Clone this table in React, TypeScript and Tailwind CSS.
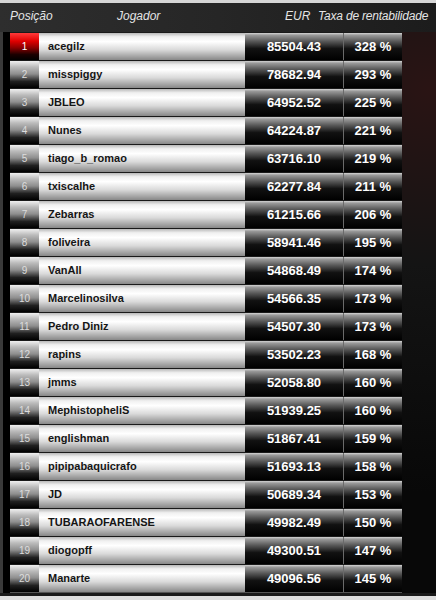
import React from "react";

type Player = {
  name: string;
  eur: string;
  rate: string;
};

const players: Player[] = [
  { name: "acegilz", eur: "85504.43", rate: "328 %" },
  { name: "misspiggy", eur: "78682.94", rate: "293 %" },
  { name: "JBLEO", eur: "64952.52", rate: "225 %" },
  { name: "Nunes", eur: "64224.87", rate: "221 %" },
  { name: "tiago_b_romao", eur: "63716.10", rate: "219 %" },
  { name: "txiscalhe", eur: "62277.84", rate: "211 %" },
  { name: "Zebarras", eur: "61215.66", rate: "206 %" },
  { name: "foliveira", eur: "58941.46", rate: "195 %" },
  { name: "VanAll", eur: "54868.49", rate: "174 %" },
  { name: "Marcelinosilva", eur: "54566.35", rate: "173 %" },
  { name: "Pedro Diniz", eur: "54507.30", rate: "173 %" },
  { name: "rapins", eur: "53502.23", rate: "168 %" },
  { name: "jmms", eur: "52058.80", rate: "160 %" },
  { name: "MephistopheliS", eur: "51939.25", rate: "160 %" },
  { name: "englishman", eur: "51867.41", rate: "159 %" },
  { name: "pipipabaquicrafo", eur: "51693.13", rate: "158 %" },
  { name: "JD", eur: "50689.34", rate: "153 %" },
  { name: "TUBARAOFARENSE", eur: "49982.49", rate: "150 %" },
  { name: "diogopff", eur: "49300.51", rate: "147 %" },
  { name: "Manarte", eur: "49096.56", rate: "145 %" },
];

function Row({ player, pos }: { player: Player; pos: number }) {
  const first = pos === 1;
  return (
    <div className="flex h-[28px] border-t border-[#1a1a1a]">
      {/* posição */}
      <div
        className={
          first
            ? "flex w-[29px] shrink-0 items-center justify-center bg-[linear-gradient(to_bottom,#ff3a3a_0%,#e00000_30%,#8a0000_55%,#1a0000_80%,#000_100%)] text-[10px] text-white"
            : "flex w-[29px] shrink-0 items-center justify-center bg-[linear-gradient(to_bottom,#f0f0f0_0%,#bcbcbc_22%,#8e8e8e_48%,#202020_76%,#000_100%)] text-[10px] text-[#dcdcdc]"
        }
      >
        {pos}
      </div>
      {/* jogador */}
      <div className="flex w-[206px] shrink-0 items-center bg-[linear-gradient(to_bottom,#b8b8b8_0%,#f0f0f0_14%,#ffffff_32%,#dadada_62%,#a2a2a2_88%,#888_100%)] pl-[9px] text-[11px] font-bold text-[#151515]">
        {player.name}
      </div>
      {/* EUR */}
      <div className="flex w-[98px] shrink-0 items-center justify-center bg-[linear-gradient(to_bottom,#d4d4d4_0%,#9a9a9a_8%,#5a5a5a_30%,#111_58%,#000_100%)] text-[13px] font-bold text-white">
        {player.eur}
      </div>
      {/* taxa */}
      <div className="flex w-[59px] shrink-0 items-center justify-center border-l border-[#6a6a6a] bg-[linear-gradient(to_bottom,#d4d4d4_0%,#9a9a9a_8%,#5a5a5a_30%,#111_58%,#000_100%)] text-[13px] font-bold text-white">
        {player.rate}
      </div>
    </div>
  );
}

export default function App() {
  return (
    <div
      className="flex h-[600px] w-[436px] flex-col overflow-hidden bg-[#0c0c0c]"
      style={{ fontFamily: '"Liberation Sans", Arial, sans-serif' }}
    >
      <div className="h-[3px] shrink-0 bg-[#d6d6d6]" />

      {/* cabeçalho */}
      <div className="flex h-[29px] shrink-0 items-center bg-[linear-gradient(to_right,#2e2e2e_0%,#262626_50%,#1c1c1c_100%)] pb-[3px] text-[12px] italic text-[#e4e4e4]">
        <span className="ml-[10px] w-[107px]">Posição</span>
        <span className="w-[168px]">Jogador</span>
        <span className="w-[33px]">EUR</span>
        <span className="tracking-[-0.2px]">Taxa de rentabilidade</span>
      </div>

      <div className="flex flex-1">
        <div className="w-[3px] bg-[#3a3a3a]" />
        <div className="w-[7px] bg-black" />
        <div className="flex w-[392px] flex-col border-b border-[#555]">
          {players.map((p, i) => (
            <Row key={p.name} player={p} pos={i + 1} />
          ))}
        </div>
        <div className="flex-1 bg-[radial-gradient(circle_at_80%_10%,#2a1414_0%,#141414_35%,#080808_80%)]" />
      </div>

      <div className="h-[3px] shrink-0 bg-[#1a1a1a]" />
      <div className="h-[5px] shrink-0 bg-[#dedede]" />
    </div>
  );
}
